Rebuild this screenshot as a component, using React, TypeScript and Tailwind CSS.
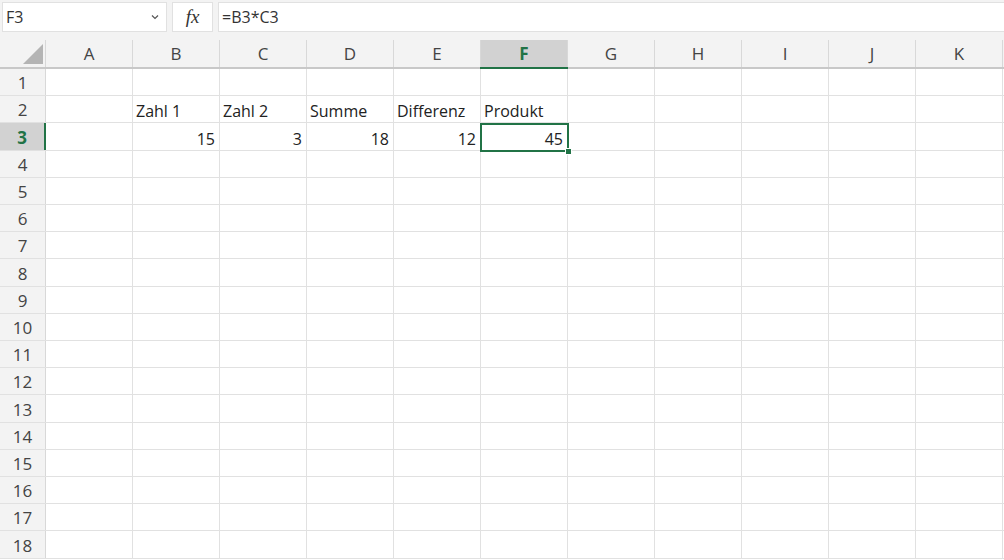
import React from "react";

const cols = ["A", "B", "C", "D", "E", "F", "G", "H", "I", "J", "K"];
const rowHeights = [27, 27, 28, 27, 27, 27, 27, 28, 27, 27, 27, 27, 28, 27, 27, 27, 27, 28];

type Cell = { t: string; right?: boolean };
const data: Record<string, Cell> = {
  B2: { t: "Zahl 1" },
  C2: { t: "Zahl 2" },
  D2: { t: "Summe" },
  E2: { t: "Differenz" },
  F2: { t: "Produkt" },
  B3: { t: "15", right: true },
  C3: { t: "3", right: true },
  D3: { t: "18", right: true },
  E3: { t: "12", right: true },
  F3: { t: "45", right: true },
};

export default function App() {
  return (
    <div
      className="w-[1004px] h-[560px] overflow-hidden bg-white text-[#222]"
      style={{ fontFamily: "'Open Sans', 'Noto Sans', sans-serif" }}
    >
      {/* formula bar */}
      <div className="h-[40px] bg-[#f3f3f3] flex items-start pt-[2px] pl-[2px] gap-[5px]">
        <div className="w-[165px] h-[30px] bg-white border border-[#e1e1e1] flex items-center justify-between pl-[3px] pr-[6px]">
          <span className="text-[16px] text-[#333]">F3</span>
          <svg width="10" height="8" viewBox="0 0 10 8" className="text-[#555]">
            <path d="M2 2.5 L5 5.5 L8 2.5" fill="none" stroke="currentColor" strokeWidth="1.2" />
          </svg>
        </div>
        <div className="w-[41px] h-[30px] bg-white border border-[#e1e1e1] flex items-center justify-center">
          <span
            className="italic text-[19px] text-[#333]"
            style={{ fontFamily: "'Liberation Serif', 'DejaVu Serif', serif" }}
          >
            fx
          </span>
        </div>
        <div className="flex-1 h-[30px] bg-white border border-[#e1e1e1] border-r-0 flex items-center pl-[3px]">
          <span className="text-[16px] text-[#333]">=B3*C3</span>
        </div>
      </div>

      {/* column headers */}
      <div className="flex h-[29px] bg-[#f3f3f3] border-b-2 border-[#c8c8c8]">
        <div className="w-[46px] shrink-0 border-r border-[#d8d8d8] relative">
          <svg width="21" height="21" viewBox="0 0 21 21" className="absolute left-[23px] top-[4px]">
            <polygon points="20,0 20,20 0,20" fill="#b4b4b4" />
          </svg>
        </div>
        {cols.map((c) =>
          c === "F" ? (
            <div
              key={c}
              className="w-[87px] shrink-0 bg-[#d2d2d2] border-r border-[#d8d8d8] flex items-center justify-center text-[17px] font-bold text-[#217346] relative"
            >
              {c}
              <div className="absolute left-[-1px] right-[-1px] bottom-[-2px] h-[2px] bg-[#217346]" />
            </div>
          ) : (
            <div
              key={c}
              className="w-[87px] shrink-0 border-r border-[#d8d8d8] flex items-center justify-center text-[17px] text-[#444]"
            >
              {c}
            </div>
          )
        )}
      </div>

      {/* rows */}
      <div className="relative">
        {rowHeights.map((h, i) => {
          const r = i + 1;
          const sel = r === 3;
          return (
            <div key={r} className={`flex border-b border-[#e1e1e1] ${h === 28 ? "h-[28px]" : "h-[27px]"}`}>
              <div
                className={
                  sel
                    ? "w-[46px] shrink-0 bg-[#d2d2d2] border-r-2 border-[#217346] flex items-center justify-center pt-[2px] text-[17px] font-bold text-[#217346]"
                    : "w-[46px] shrink-0 bg-[#f3f3f3] border-r border-[#d8d8d8] flex items-center justify-center pt-[2px] text-[17px] text-[#444]"
                }
              >
                {r}
              </div>
              {cols.map((c) => {
                const cell = data[`${c}${r}`];
                return (
                  <div
                    key={c}
                    className={`w-[87px] shrink-0 border-r border-[#e1e1e1] flex items-end pb-0 px-[3px] text-[16px] leading-[22px] text-[#222] ${
                      cell?.right ? "justify-end pr-[4px]" : "justify-start"
                    }`}
                  >
                    {cell?.t ?? ""}
                  </div>
                );
              })}
            </div>
          );
        })}
        {/* selection box F3 */}
        <div className="absolute left-[480px] top-[54px] w-[89px] h-[29px] border-2 border-[#217346] pointer-events-none">
          <div className="absolute right-[-5px] bottom-[-5px] w-[7px] h-[7px] bg-[#217346] border border-white" />
        </div>
      </div>
    </div>
  );
}
